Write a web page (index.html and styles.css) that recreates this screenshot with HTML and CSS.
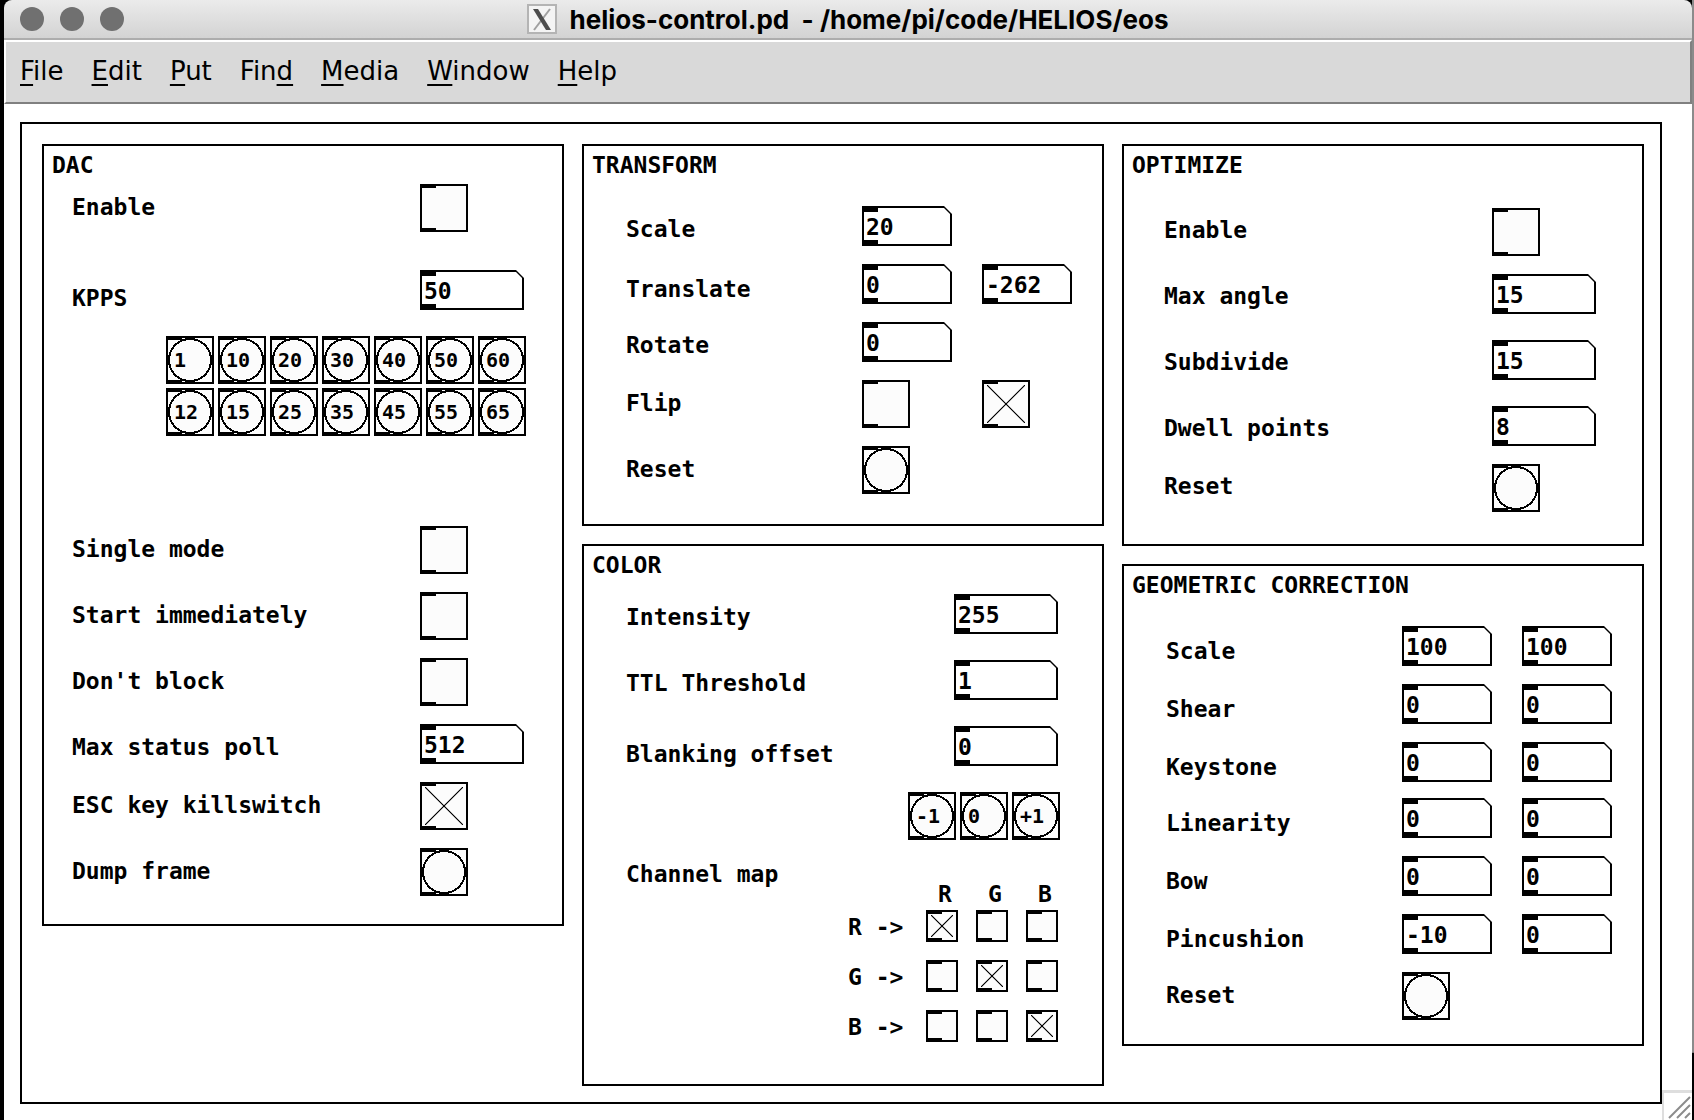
FILE: index.html
```html
<!DOCTYPE html>
<html lang="en">
<head>
<meta charset="utf-8">
<title>helios-control.pd - /home/pi/code/HELIOS/eos</title>
<link rel="stylesheet" href="styles.css">
</head>
<body>
<div class="window">
  <header class="titlebar">
    <div class="lights">
      <button class="light" type="button" aria-label="Close"></button>
      <button class="light" type="button" aria-label="Minimize"></button>
      <button class="light" type="button" aria-label="Zoom"></button>
    </div>
    <h1 class="title">
      <svg class="title-icon" viewBox="0 0 30 30" aria-hidden="true">
        <rect x="1" y="1" width="28" height="28" fill="#f4f4f4" stroke="#b4b4b4" stroke-width="2"/>
        <path d="M23 5 L7 26" stroke="#a0a0a0" stroke-width="2" fill="none"/>
        <path d="M6 5 H11 L24 26 H19 Z" fill="#4c4c4c"/>
      </svg>
      <span class="title-text">helios-control.pd&nbsp; - /home/pi/code/HELIOS/eos</span>
    </h1>
  </header>
  <nav class="menubar">
    <button class="menu" type="button"><u>F</u>ile</button>
    <button class="menu" type="button"><u>E</u>dit</button>
    <button class="menu" type="button"><u>P</u>ut</button>
    <button class="menu" type="button">Fin<u>d</u></button>
    <button class="menu" type="button"><u>M</u>edia</button>
    <button class="menu" type="button"><u>W</u>indow</button>
    <button class="menu" type="button"><u>H</u>elp</button>
  </nav>
  <main class="canvas">
    <div class="patch">
      <div class="column">
        <section class="panel panel--dac">
          <h2 class="panel-title">DAC</h2>
          <div class="row row--first"><label class="name" for="dac-enable">Enable</label><div class="controls"><input class="toggle" type="checkbox" id="dac-enable"></div></div>
          <div class="row row--kpps"><label class="name name--lower" for="kpps">KPPS</label><div class="controls"><span class="number number--wide"><input class="number-field" type="text" id="kpps" value="50"></span></div></div>
          <div class="presets">
            <button class="bang" type="button">1</button>
            <button class="bang" type="button">10</button>
            <button class="bang" type="button">20</button>
            <button class="bang" type="button">30</button>
            <button class="bang" type="button">40</button>
            <button class="bang" type="button">50</button>
            <button class="bang" type="button">60</button>
            <button class="bang" type="button">12</button>
            <button class="bang" type="button">15</button>
            <button class="bang" type="button">25</button>
            <button class="bang" type="button">35</button>
            <button class="bang" type="button">45</button>
            <button class="bang" type="button">55</button>
            <button class="bang" type="button">65</button>
          </div>
          <div class="row row--first"><label class="name" for="single">Single mode</label><div class="controls"><input class="toggle" type="checkbox" id="single"></div></div>
          <div class="row"><label class="name" for="start">Start immediately</label><div class="controls"><input class="toggle" type="checkbox" id="start"></div></div>
          <div class="row"><label class="name" for="block">Don't block</label><div class="controls"><input class="toggle" type="checkbox" id="block"></div></div>
          <div class="row"><label class="name" for="poll">Max status poll</label><div class="controls"><span class="number number--wide"><input class="number-field" type="text" id="poll" value="512"></span></div></div>
          <div class="row"><label class="name" for="esc">ESC key killswitch</label><div class="controls"><input class="toggle" type="checkbox" id="esc" checked></div></div>
          <div class="row"><label class="name" for="dump">Dump frame</label><div class="controls"><button class="bang" type="button" id="dump"></button></div></div>
        </section>
      </div>
      <div class="column">
        <section class="panel panel--transform">
          <h2 class="panel-title">TRANSFORM</h2>
          <div class="row row--first"><label class="name" for="t-scale">Scale</label><div class="controls"><span class="number"><input class="number-field" type="text" id="t-scale" value="20"></span></div></div>
          <div class="row"><label class="name name--low" for="t-x">Translate</label><div class="controls"><span class="number"><input class="number-field" type="text" id="t-x" value="0"></span><span class="number"><input class="number-field" type="text" aria-label="Translate Y" value="-262"></span></div></div>
          <div class="row"><label class="name" for="t-rot">Rotate</label><div class="controls"><span class="number"><input class="number-field" type="text" id="t-rot" value="0"></span></div></div>
          <div class="row"><label class="name" for="flip-x">Flip</label><div class="controls controls--flip"><input class="toggle" type="checkbox" id="flip-x"><input class="toggle" type="checkbox" aria-label="Flip Y" checked></div></div>
          <div class="row"><label class="name" for="t-reset">Reset</label><div class="controls"><button class="bang" type="button" id="t-reset"></button></div></div>
        </section>
        <section class="panel panel--color">
          <h2 class="panel-title">COLOR</h2>
          <div class="row row--first"><label class="name" for="intensity">Intensity</label><div class="controls"><span class="number number--wide"><input class="number-field" type="text" id="intensity" value="255"></span></div></div>
          <div class="row row--loose"><label class="name" for="ttl">TTL Threshold</label><div class="controls"><span class="number number--wide"><input class="number-field" type="text" id="ttl" value="1"></span></div></div>
          <div class="row row--loose"><label class="name name--lower" for="blanking">Blanking offset</label><div class="controls"><span class="number number--wide"><input class="number-field" type="text" id="blanking" value="0"></span></div></div>
          <div class="steps">
            <button class="bang" type="button">-1</button>
            <button class="bang" type="button">0</button>
            <button class="bang" type="button">+1</button>
          </div>
          <div class="row row--map">
            <span class="name" id="map-name">Channel map</span>
            <table class="map" aria-labelledby="map-name">
              <thead><tr><td></td><th scope="col">R</th><th scope="col">G</th><th scope="col">B</th></tr></thead>
              <tbody>
                <tr><th scope="row">R -&gt;</th><td><input class="toggle toggle--small" type="checkbox" aria-label="R to R" checked></td><td><input class="toggle toggle--small" type="checkbox" aria-label="R to G"></td><td><input class="toggle toggle--small" type="checkbox" aria-label="R to B"></td></tr>
                <tr><th scope="row">G -&gt;</th><td><input class="toggle toggle--small" type="checkbox" aria-label="G to R"></td><td><input class="toggle toggle--small" type="checkbox" aria-label="G to G" checked></td><td><input class="toggle toggle--small" type="checkbox" aria-label="G to B"></td></tr>
                <tr><th scope="row">B -&gt;</th><td><input class="toggle toggle--small" type="checkbox" aria-label="B to R"></td><td><input class="toggle toggle--small" type="checkbox" aria-label="B to G"></td><td><input class="toggle toggle--small" type="checkbox" aria-label="B to B" checked></td></tr>
              </tbody>
            </table>
          </div>
        </section>
      </div>
      <div class="column">
        <section class="panel panel--optimize">
          <h2 class="panel-title">OPTIMIZE</h2>
          <div class="row row--first"><label class="name" for="o-enable">Enable</label><div class="controls"><input class="toggle" type="checkbox" id="o-enable"></div></div>
          <div class="row"><label class="name" for="angle">Max angle</label><div class="controls"><span class="number number--wide"><input class="number-field" type="text" id="angle" value="15"></span></div></div>
          <div class="row row--loose"><label class="name" for="subdivide">Subdivide</label><div class="controls"><span class="number number--wide"><input class="number-field" type="text" id="subdivide" value="15"></span></div></div>
          <div class="row row--loose"><label class="name" for="dwell">Dwell points</label><div class="controls"><span class="number number--wide"><input class="number-field" type="text" id="dwell" value="8"></span></div></div>
          <div class="row"><label class="name" for="o-reset">Reset</label><div class="controls"><button class="bang" type="button" id="o-reset"></button></div></div>
        </section>
        <section class="panel panel--geometry">
          <h2 class="panel-title">GEOMETRIC CORRECTION</h2>
          <div class="row row--first"><label class="name name--low" for="g-scale">Scale</label><div class="controls"><span class="number"><input class="number-field" type="text" id="g-scale" value="100"></span><span class="number"><input class="number-field" type="text" aria-label="Scale Y" value="100"></span></div></div>
          <div class="row"><label class="name name--low" for="shear">Shear</label><div class="controls"><span class="number"><input class="number-field" type="text" id="shear" value="0"></span><span class="number"><input class="number-field" type="text" aria-label="Shear Y" value="0"></span></div></div>
          <div class="row"><label class="name name--low" for="keystone">Keystone</label><div class="controls"><span class="number"><input class="number-field" type="text" id="keystone" value="0"></span><span class="number"><input class="number-field" type="text" aria-label="Keystone Y" value="0"></span></div></div>
          <div class="row row--tight"><label class="name name--low" for="linearity">Linearity</label><div class="controls"><span class="number"><input class="number-field" type="text" id="linearity" value="0"></span><span class="number"><input class="number-field" type="text" aria-label="Linearity Y" value="0"></span></div></div>
          <div class="row"><label class="name name--low" for="bow">Bow</label><div class="controls"><span class="number"><input class="number-field" type="text" id="bow" value="0"></span><span class="number"><input class="number-field" type="text" aria-label="Bow Y" value="0"></span></div></div>
          <div class="row"><label class="name name--low" for="pincushion">Pincushion</label><div class="controls"><span class="number"><input class="number-field" type="text" id="pincushion" value="-10"></span><span class="number"><input class="number-field" type="text" aria-label="Pincushion Y" value="0"></span></div></div>
          <div class="row"><label class="name" for="g-reset">Reset</label><div class="controls"><button class="bang" type="button" id="g-reset"></button></div></div>
        </section>
      </div>
    </div>
    <svg class="grip" viewBox="0 0 30 30" aria-hidden="true">
      <path d="M0 30 V1 H30" fill="none" stroke="#dedede" stroke-width="4"/>
      <path d="M7 28 L28 7 M15 28 L28 15 M23 28 L28 23" fill="none" stroke="#8c8c8c" stroke-width="2"/>
    </svg>
  </main>
</div>
</body>
</html>
```

FILE: styles.css
```css
* {
  box-sizing: border-box;
}

body {
  margin: 0;
  background: #000;
  color: #000;
  font: bold 23px/40px "DejaVu Sans Mono", monospace;
}

button,
input {
  margin: 0;
  padding: 0;
  border: 0;
  border-radius: 0;
  background: none;
  color: inherit;
  font: inherit;
}

.window {
  display: flex;
  flex-direction: column;
  min-height: 100vh;
  padding: 0 2px 0 4px;
  background: linear-gradient(#8b8b8b, #8b8b8b) right top / 2px 94% no-repeat #000;
}

/* Title bar */

.titlebar {
  display: grid;
  grid-template-columns: 1fr auto 1fr;
  align-items: center;
  height: 40px;
  padding: 0 16px;
  border-bottom: 2px solid #adadad;
  border-radius: 8px 8px 0 0;
  background: linear-gradient(#ebebeb, #d3d3d3);
}

.lights {
  display: flex;
  gap: 16px;
}

.light {
  width: 24px;
  height: 24px;
  border-radius: 50%;
  background: #707070;
}

.title {
  display: flex;
  align-items: center;
  gap: 12px;
  margin: 0;
  font: bold 26px/36px Inter, "Liberation Sans", sans-serif;
}

.title-text {
  padding-top: 2px;
}

.title-icon {
  width: 30px;
  height: 30px;
}

/* Menu bar */

.menubar {
  display: flex;
  gap: 28px;
  height: 64px;
  padding: 0 14px 2px;
  border: 2px solid #808080;
  border-top-color: #fff;
  border-left-color: #fff;
  background: #d9d9d9;
}

.menu {
  font: 26px/56px "DejaVu Sans", sans-serif;
}

.menu u {
  text-decoration-thickness: 2px;
  text-underline-offset: 4px;
}

/* Patch canvas */

.canvas {
  position: relative;
  flex: 1;
  padding: 18px 30px 16px 16px;
  background: #fff;
}

.patch {
  display: grid;
  grid-template-columns: repeat(3, 1fr);
  gap: 18px;
  padding: 20px 16px 16px 20px;
  border: 2px solid #000;
}

.column {
  display: flex;
  flex-direction: column;
  gap: 18px;
}

.panel {
  --indent: 32px;
  padding: 0 0 24px calc(8px + var(--indent));
  border: 2px solid #000;
}

.panel--dac {
  --controls: 142px;
  --indent: 20px;
  padding-bottom: 28px;
}

.panel--transform {
  --controls: 240px;
  --indent: 34px;
  padding-bottom: 30px;
}

.panel--color {
  --controls: 148px;
  --indent: 34px;
}

.panel--optimize {
  --controls: 150px;
  padding-bottom: 32px;
}

.panel--geometry {
  --controls: 240px;
  --indent: 34px;
}

.panel-title {
  margin: 0 0 22px calc(0px - var(--indent));
  font: inherit;
  line-height: 38px;
}

.panel--dac .panel-title {
  margin-bottom: 0;
}

.panel--color .panel-title {
  margin-bottom: 10px;
}

.panel--optimize .panel-title {
  margin-bottom: 24px;
}

/* Rows */

.row {
  display: flex;
  align-items: flex-start;
  margin-top: 18px;
}

.row--first {
  margin-top: 0;
}

.row--tight {
  margin-top: 16px;
}

.row--loose {
  margin-top: 26px;
}

.row--kpps {
  margin-top: 38px;
}

.row--map {
  margin-top: 14px;
}

.name {
  flex: 1;
  padding-top: 3px;
}

.name--low {
  padding-top: 5px;
}

.name--lower {
  padding-top: 8px;
}

.panel--optimize .name {
  padding-top: 2px;
}

.row--map .name {
  padding-top: 0;
}

.row:has(.number) {
  height: 40px;
}

.controls {
  display: flex;
  gap: 30px;
  width: var(--controls);
}

.controls--flip {
  gap: 72px;
}

.presets {
  display: grid;
  grid-template-columns: repeat(7, 48px);
  justify-content: end;
  gap: 4px;
  margin: 26px 36px 90px 0;
}

.steps {
  display: flex;
  justify-content: flex-end;
  gap: 4px;
  margin: 26px 42px 0 0;
}

/* Controls */

.toggle,
.bang {
  flex: none;
  display: block;
  width: 48px;
  height: 48px;
  border: 2px solid #000;
  background:
    linear-gradient(#000, #000) left top / 14px 2px no-repeat,
    linear-gradient(#000, #000) left bottom / 14px 2px no-repeat,
    #fcfcfc;
}

.toggle {
  appearance: none;
}

.toggle:checked {
  --cross: 38px;
  background:
    linear-gradient(#000, #000) left top / 14px 2px no-repeat,
    linear-gradient(#000, #000) left bottom / 14px 2px no-repeat,
    linear-gradient(to top right, transparent calc(50% - 1px), #000 50%, transparent calc(50% + 1px)) center / var(--cross) var(--cross) no-repeat,
    linear-gradient(to top left, transparent calc(50% - 1px), #000 50%, transparent calc(50% + 1px)) center / var(--cross) var(--cross) no-repeat,
    #fcfcfc;
}

.toggle--small {
  width: 32px;
  height: 32px;
}

.toggle--small:checked {
  --cross: 22px;
}

.bang {
  padding-left: 6px;
  background:
    linear-gradient(#000, #000) left top / 14px 2px no-repeat,
    linear-gradient(#000, #000) left bottom / 14px 2px no-repeat,
    radial-gradient(circle, transparent 20px, #000 20px, #000 22px, transparent 22px),
    #fcfcfc;
  font-size: 20px;
  line-height: 44px;
  text-align: left;
}

.number {
  flex: none;
  width: 90px;
  height: 40px;
  padding: 2px;
  background: #000;
  clip-path: polygon(0 0, calc(100% - 8px) 0, 100% 8px, 100% 100%, 0 100%);
}

.number--wide {
  width: 104px;
}

.number-field {
  display: block;
  width: 100%;
  height: 36px;
  padding: 2px 0 0 2px;
  background:
    linear-gradient(#000, #000) left top / 14px 4px no-repeat,
    linear-gradient(#000, #000) left bottom / 14px 4px no-repeat,
    #fff;
  clip-path: polygon(0 0, calc(100% - 6px) 0, 100% 6px, 100% 100%, 0 100%);
  line-height: 34px;
}

/* Channel map */

.map {
  margin: 26px 26px 0 0;
  border-collapse: collapse;
}

.map th,
.map td {
  height: 50px;
  min-width: 50px;
  padding: 0 18px 0 0;
  font-weight: inherit;
  line-height: 34px;
  text-align: left;
  vertical-align: top;
}

.map thead th,
.map thead td {
  height: 30px;
  padding: 0 0 0 12px;
  line-height: 28px;
}

.map tbody th {
  width: 78px;
}

.grip {
  position: absolute;
  right: 0;
  bottom: 0;
  width: 30px;
  height: 30px;
}
```
